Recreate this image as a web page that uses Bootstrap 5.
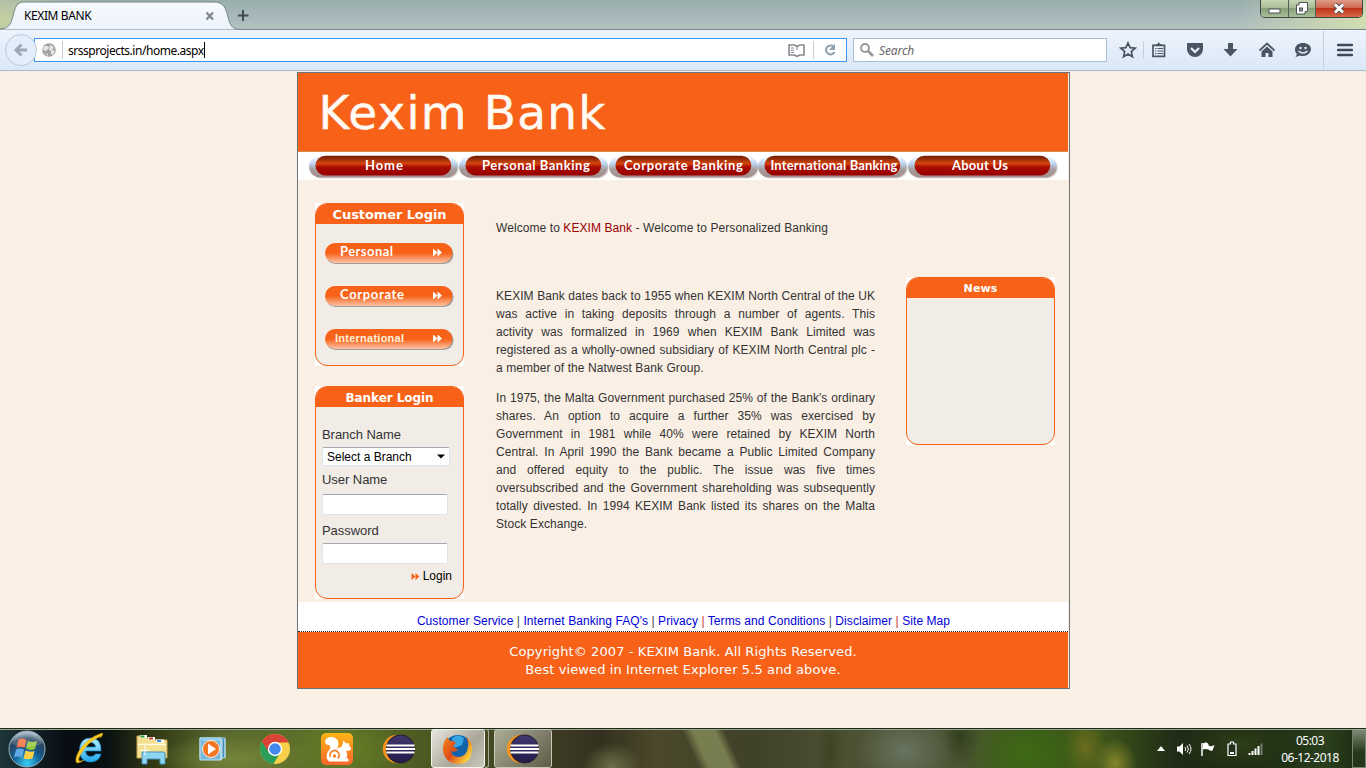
<!DOCTYPE html>
<html lang="en">
<head>
<meta charset="utf-8">
<meta name="viewport" content="width=device-width, initial-scale=1">
<title>KEXIM BANK</title>
<link href="https://cdn.jsdelivr.net/npm/bootstrap@5.3.0/dist/css/bootstrap.min.css" rel="stylesheet">
<style>
  body{width:1366px;height:768px;overflow:hidden;background:#faefe5;font-family:"Liberation Sans",sans-serif;font-size:12px;line-height:18px;color:#333}
  svg{display:block;flex:none}
  a{text-decoration:none}
  /* browser chrome */
  .chrome{height:71px;font-family:"Noto Sans",sans-serif;color:#000}
  .titlebar{height:30px;background:radial-gradient(ellipse 90px 40px at 0 20px,#c5cf9f,transparent),radial-gradient(ellipse 130px 60px at 1366px 20px,#d3deb0,transparent),linear-gradient(#9aafac,#a6b7bc 50%,#b1c2bd);border-bottom:1px solid #75868a}
  .tabbox{width:238px;height:30px}
  .tabtitle{left:24px;top:7px;font-size:12px;letter-spacing:-.4px}
  .newtab{margin-top:10px}
  .toolbar{height:41px;background:linear-gradient(#edf3fc,#dbe8f8);border-bottom:1px solid #a5bbd2;padding-left:5px}
  .urlbox{width:813px;height:24px;margin-left:-3px;background:#fff;border:1px solid #3b97f2}
  .urlrow{width:842px}
  .backbtn{width:32px;height:32px;border:1px solid #b9cbdd;background:#e4eefa;border-radius:50%;z-index:2}
  .searchbox{width:254px;height:24px;margin-left:6px;background:#fff;border:1px solid #a9bdd4;font-size:12px;color:#666}
  .vsep{width:1px;height:18px;background:#c3cfdb}
  .winbtns{width:103px;height:18px;margin-right:3px;border:1px solid #3d4a42;border-top:0;border-radius:0 0 5px 5px;overflow:hidden}
  .wb{height:17px;background:linear-gradient(#c7d5b5,#a9bc97 45%,#879f7b 50%,#a9bf97);border-right:1px solid #526252}
  .wb.close{background:linear-gradient(#dc9c88,#cf694e 45%,#bf3417 50%,#d8694a);border-right:0}
  /* page */
  .stage{height:657px;padding-top:1px}
  .frame{width:773px;height:617px;margin-left:297px;border:1px solid #6c7377}
  .inner{width:770px}
  .banner{height:79px;background:#f76218;border-bottom:1px solid #d88a45}
  .navrow{height:28px;background:#fff;padding-left:11px}
  .cell{width:149.75px;height:28px}
  .nt{font:bold 13px Lato,sans-serif;font-variant-ligatures:none;fill:#fff}
  .nt.intl{font:bold 11px "Liberation Sans",sans-serif;fill:#fff3dc}
  .mainarea{height:422px;background:#faefe5}
  .leftcol{width:149px;margin:23px 0 0 17px}
  .cornerbox{background:#fff}
  .panel{background:#f1ece6;border:1px solid #f76218;border-radius:12px;overflow:hidden}
  .phead{height:20px;background:#f76218;color:#fff;font:bold 13px/20px "DejaVu Sans",sans-serif;text-align:center;letter-spacing:-.1px}
  .story{width:379px;margin-left:32px;padding-top:39px;text-align:justify;text-align-last:justify;letter-spacing:.06px}
  .endline{display:block;text-align-last:left;letter-spacing:.08px}
  .newscol{margin:97px 0 0 31px;width:149px}
  .lbl{font-size:13px;line-height:18px;letter-spacing:-.05px}
  .fbox{border:1px solid #dfe3ea;border-top-color:#a5a9b1;border-radius:2px;background:#fff;width:126px;height:21px;padding:0}
  .sel{width:128px;height:19px;color:#000;padding:0 4px}
  .links{height:30px;background:#fff;border-bottom:1px dotted #222;padding-top:10px;padding-left:1px;color:#444;letter-spacing:.074px}
  .links a{color:#0000d8}
  .foot{height:56px;background:#f76218;color:#fff;font:13px/18px "DejaVu Sans",sans-serif;padding-top:11px;text-align:center;letter-spacing:.1px}
  /* taskbar */
  .taskbar{height:40px;border-top:1px solid #1d2a18;box-shadow:inset 0 1px #9aa58f;
   background:linear-gradient(65deg,transparent 25%,#858c58cc 36%,#858c58cc 58%,transparent 68%) 675px 0/80px 40px no-repeat,radial-gradient(ellipse 80px 26px at 235px 30px,#76853a,transparent),radial-gradient(ellipse 60px 30px at 345px 20px,#647c24,transparent),radial-gradient(ellipse 30px 24px at 612px 38px,#6d7048,transparent),radial-gradient(ellipse 14px 40px at 830px 20px,#3c4424,transparent),radial-gradient(ellipse 50px 40px at 905px 22px,#68735f,transparent),radial-gradient(ellipse 20px 30px at 960px 8px,#33401f,transparent),radial-gradient(ellipse 60px 45px at 1025px 25px,#3f6a14,transparent),radial-gradient(ellipse 22px 30px at 1085px 18px,#6b6c1e,transparent),radial-gradient(ellipse 22px 25px at 1115px 34px,#84842a,transparent),radial-gradient(ellipse 60px 40px at 1240px 15px,#2d3f19,transparent),linear-gradient(90deg,#1d3538,#070c12 5%,#0b1212 8%,#2f3612 11%,#59672e 16%,#5e7228 25%,#47521f 33%,#403d25 40%,#33301f 44%,#4b482b 48%,#3f4129 55%,#4d5134 62%,#4c5434 70%,#395619 76%,#3f5a1a 80%,#202c16 86%,#16200f 91%,#2a401d 97%,#1b2a12)}
  .orb{width:59px;padding-left:8px}
  .slot{width:61.8px}
  .taskbtn{height:39px;border:1px solid #c9cabd;border-radius:3px;background:linear-gradient(135deg,#e0dfd2aa,#9a998955)}
  .taskbtn.current{background:linear-gradient(135deg,#e7e6df,#aaa798 60%,#cac9bd);border-color:#f4f4ef}
  .tray{margin-left:auto;color:#fff}
  .clock{width:74px;font:12px/17px "Noto Sans",sans-serif;text-align:center;letter-spacing:-.5px;white-space:nowrap}
  .peek{width:14px;height:38px;border:1px solid #77866a;background:linear-gradient(#7b8873,#24371a 60%)}
</style>
</head>
<body>
<svg width="0" height="0" class="position-absolute">
  <defs>
    <linearGradient id="red" x2="0" y2="1"><stop offset="0" stop-color="#6d1b04"/><stop offset=".18" stop-color="#982e08"/><stop offset=".38" stop-color="#d5450f"/><stop offset=".58" stop-color="#a80b02"/><stop offset="1" stop-color="#970000"/></linearGradient>
    <linearGradient id="met" x2="0" y2="1"><stop offset="0" stop-color="#fff"/><stop offset=".35" stop-color="#bcd6f4"/><stop offset=".62" stop-color="#a69c9c"/><stop offset="1" stop-color="#a58f8b"/></linearGradient>
    <linearGradient id="org" x2="0" y2="1"><stop offset="0" stop-color="#f76218"/><stop offset=".5" stop-color="#f76218"/><stop offset="1" stop-color="#fbc3a6"/></linearGradient>
    <linearGradient id="tabg" x2="0" y2="1"><stop offset="0" stop-color="#f7fafe"/><stop offset="1" stop-color="#edf3fc"/></linearGradient>
    <linearGradient id="navy" x2="0" y2="1"><stop offset="0" stop-color="#41376f"/><stop offset="1" stop-color="#241b4a"/></linearGradient>
    <radialGradient id="orbg" cx=".5" cy=".9" r=".85"><stop offset="0" stop-color="#39d2f6"/><stop offset=".45" stop-color="#135d93"/><stop offset=".8" stop-color="#28455e"/><stop offset="1" stop-color="#9db4c4"/></radialGradient>
    <linearGradient id="ieg" x2="0" y2="1"><stop offset="0" stop-color="#b5efff"/><stop offset="1" stop-color="#22a8ec"/></linearGradient>
    <linearGradient id="uc" x2="0" y2="1"><stop offset="0" stop-color="#fdb515"/><stop offset="1" stop-color="#f9652e"/></linearGradient>
    <linearGradient id="fx" x2="1" y2=".6"><stop offset="0" stop-color="#f28a1d"/><stop offset=".5" stop-color="#df4a19"/><stop offset="1" stop-color="#f9d53c"/></linearGradient>
    <symbol id="pill" viewBox="0 0 150 28">
      <rect x="2" y="5" width="148" height="21.500" rx="10.700" fill="#dad6d4"/>
      <rect y="4" width="149" height="21.500" rx="10.700" fill="url(#met)"/>
      <rect x="6.500" y="3.700" width="136" height="19.800" rx="9.900" fill="url(#red)"/>
    </symbol>
    <symbol id="arrows" viewBox="0 0 9 8"><path d="M0 0L4.500 4 0 8zM4.500 0L9 4 4.500 8z"/></symbol>
    <symbol id="sidebtn" viewBox="0 0 132 24">
      <rect x="2" y="2.500" width="127.500" height="19.500" rx="9.700" fill="#a09c99"/>
      <rect x="1" y="1" width="127.500" height="20" rx="10" fill="url(#org)"/>
      <use href="#arrows" x="109" y="6.500" width="9" height="8" fill="#fff"/>
    </symbol>
    <symbol id="eclipse" viewBox="0 0 34 32">
      <circle cx="15" cy="16" r="14.200" fill="#f7941e"/><circle cx="18.500" cy="16" r="14.500" fill="#282431"/><circle cx="18.500" cy="16" r="13.500" fill="url(#navy)"/>
      <path d="M4.500 12.500h28M4 16h29M4.500 19.500h28" stroke="#fff" stroke-width="1.800"/>
    </symbol>
  </defs>
</svg>

<header class="chrome">
  <div class="titlebar d-flex">
    <div class="tabbox position-relative">
      <svg width="240" height="30"><path d="M0 30V29C9 28.500 11 24 13 16 15 7 17 2 24 2H214C224 2 226 9 228 17 230 25 232 29 239 29.500V30z" fill="url(#tabg)" stroke="#75868a"/><path d="M206.500 12.500l6.500 7M213 12.500l-6.500 7" stroke="#7d8792" stroke-width="2.200"/></svg>
      <span class="tabtitle position-absolute">KEXIM BANK</span>
    </div>
    <svg width="12" height="12" class="newtab"><path d="M5 0v11M-.5 5.500h11" stroke="#414b50" stroke-width="2"/></svg>
    <div class="winbtns d-flex ms-auto">
      <div class="wb d-flex justify-content-center align-items-center" style="width:28px"><svg width="14" height="14"><rect x="1" y="7" width="11" height="4" fill="#fff" stroke="#4c555b"/></svg></div>
      <div class="wb d-flex justify-content-center align-items-center" style="width:27px"><svg width="14" height="14"><path d="M4 .5h8.500v9H10V12H1.500V3H4z" fill="#fff" stroke="#4c555b"/><rect x="4.500" y="6" width="3" height="3" fill="#8fa080" stroke="#4c555b"/></svg></div>
      <div class="wb close flex-fill d-flex justify-content-center align-items-center"><svg width="14" height="14"><path d="M3 2.500l8 8M11 2.500l-8 8" stroke="#574b50" stroke-width="4.600"/><path d="M3 2.500l8 8M11 2.500l-8 8" stroke="#fff" stroke-width="2.800"/></svg></div>
    </div>
  </div>
  <div class="toolbar d-flex align-items-center">
    <div class="urlrow d-flex align-items-center">
      <div class="backbtn d-flex align-items-center justify-content-center flex-shrink-0"><svg width="16" height="16"><path d="M14 8H3M8.500 2.500L3 8l5.500 5.500" fill="none" stroke="#9ca9b8" stroke-width="3"/></svg></div>
      <div class="urlbox d-flex align-items-center">
        <svg width="14" height="14" style="margin-left:7px"><circle cx="7" cy="7" r="6.800" fill="#a2a2a2"/><path d="M2 3l4 0 1 2-3 3-3-1zM8 2l4 2-2 3 3 1-2 4-2-1V8L7 7zM3 10l3 1v2z" fill="#e6e6e6"/></svg>
        <span class="vsep" style="margin-left:6px"></span>
        <span style="margin-left:5px;padding-top:2px;letter-spacing:-.47px">srssprojects.in/home.aspx</span><span style="width:1px;height:16px;background:#000"></span>
        <svg width="18" height="14" class="ms-auto"><path d="M1 2h5.500L9 3.500 11.500 2H16v10h-4.500L9 13.500 6.500 12H1z" fill="#fff" stroke="#858b91" stroke-width="1.600"/><path d="M9 4v3M3 5h3M3 7.300h3M3 9.500h3" stroke="#858b91"/></svg>
        <span class="vsep" style="margin-left:7px"></span>
        <svg width="14" height="14" style="margin:0 9px"><path d="M10.500 3.500A4.500 4.500 0 1 0 11.500 9" fill="none" stroke="#92a1b0" stroke-width="2"/><path d="M12 1v6H6z" fill="#92a1b0"/></svg>
      </div>
    </div>
    <div class="searchbox d-flex align-items-center"><svg width="14" height="14" style="margin-left:6px"><circle cx="5" cy="5" r="3.900" fill="none" stroke="#989898" stroke-width="2"/><path d="M8 8l5 5" stroke="#989898" stroke-width="2.600"/></svg><i style="margin-left:5px;padding-top:2px;letter-spacing:-.1px">Search</i></div>
    <div class="d-flex align-items-center" style="margin-left:12px">
      <svg width="18" height="18"><path d="M9 2l2.100 4.700 5 .5-3.800 3.400 1.200 5.100L9 13l-4.500 2.700 1.200-5.100L1.900 7.200l5-.5z" fill="none" stroke="#4a5661" stroke-width="1.700"/></svg>
      <span class="vsep" style="margin-left:6px"></span>
      <svg width="16" height="16" style="margin-left:7px"><path d="M2 3.300h11.500v11H2z" fill="none" stroke="#4a5661" stroke-width="1.700"/><path d="M5 3.500V2h1.500L7.700 0 9 2h1.500v1.500z" fill="#4a5661"/><path d="M4 6.500h1.500M6.500 6.500H12M4 9h1.500M6.500 9H12M4 11.500h1.500M6.500 11.500H12" stroke="#4a5661"/></svg>
      <svg width="18" height="16" style="margin-left:19px"><path d="M1.500 1h15q.5 0 .5 1v5a8 8 0 0 1-16 0V2q0-1 .5-1z" fill="#4a5661"/><path d="M5 6l4 4 4-4" fill="none" stroke="#e7effa" stroke-width="2.200"/></svg>
      <svg width="16" height="16" style="margin-left:19px"><path d="M5 1h5v6h4.500l-7 7.500L.5 7H5z" fill="#4a5661"/></svg>
      <svg width="16" height="16" style="margin-left:20px"><path d="M.5 8.500L8 1.500l7.500 7" fill="none" stroke="#4a5661" stroke-width="1.800"/><path d="M8 4.500l5.500 5V15h-4v-4h-3v4h-4V9.500z" fill="#4a5661"/></svg>
      <svg width="18" height="16" style="margin-left:19px"><path d="M9 1c4.500 0 8 2.500 8 6s-3.500 7-8 7c-1 0-2 0-3-.5L1.500 15 3 12C1.500 11 1 9 1 7.500 1 3.500 4.500 1 9 1z" fill="#4a5661"/><circle cx="6.500" cy="6" r="1.200" fill="#e7effa"/><circle cx="11.500" cy="6" r="1.200" fill="#e7effa"/><path d="M4.500 9q4.500 4 9 0" fill="none" stroke="#e7effa" stroke-width="1.400"/></svg>
      <span class="vsep" style="height:38px;margin-left:11px"></span>
      <svg width="16" height="14" style="margin-left:13px"><path d="M1 2h14M1 7h14M1 12h14" stroke="#3d4a57" stroke-width="2.400" stroke-linecap="round"/></svg>
    </div>
  </div>
</header>

<main class="stage">
  <div class="frame"><div class="inner">
    <div class="banner"><svg width="400" height="78" role="img" aria-label="Kexim Bank"><text x="20.500" y="55.500" font-family="DejaVu Sans,sans-serif" font-size="47" fill="#fffaf3" stroke="#fffaf3" stroke-width=".4" textLength="287">Kexim Bank</text></svg></div>
    <nav class="navrow d-flex">
      <svg class="cell" viewBox="0 0 150 28"><use href="#pill" width="150" height="28"/><text class="nt" x="56" y="18" textLength="38">Home</text></svg>
      <svg class="cell" viewBox="0 0 150 28"><use href="#pill" width="150" height="28"/><text class="nt" x="23" y="18" textLength="108">Personal Banking</text></svg>
      <svg class="cell" viewBox="0 0 150 28"><use href="#pill" width="150" height="28"/><text class="nt" x="15" y="18" textLength="119">Corporate Banking</text></svg>
      <svg class="cell" viewBox="0 0 150 28"><use href="#pill" width="150" height="28"/><text class="nt" x="12.500" y="18" textLength="127">International Banking</text></svg>
      <svg class="cell" viewBox="0 0 150 28"><use href="#pill" width="150" height="28"/><text class="nt" x="44" y="18" textLength="56">About Us</text></svg>
    </nav>
    <div class="mainarea d-flex align-items-start">
      <div class="leftcol">
        <div class="cornerbox"><div class="panel" style="height:163px">
          <div class="phead"><div style="padding-top:1px">Customer Login</div></div>
          <div style="padding:18px 0 0 8px">
            <svg width="132" height="24"><use href="#sidebtn" width="132" height="24"/><text class="nt" x="16" y="14" textLength="53">Personal</text></svg>
            <svg width="132" height="24" style="margin-top:19px"><use href="#sidebtn" width="132" height="24"/><text class="nt" x="16" y="14" textLength="64">Corporate</text></svg>
            <svg width="132" height="24" style="margin-top:19px"><use href="#sidebtn" width="132" height="24"/><text class="nt intl" x="11" y="14" textLength="69">International</text></svg>
          </div>
        </div></div>
        <div class="cornerbox" style="margin-top:20px"><div class="panel" style="height:213px">
          <div class="phead" style="letter-spacing:-.05px;font-size:12px"><div style="padding-top:1px">Banker Login</div></div>
          <div style="padding:19px 0 0 6px">
            <div class="lbl">Branch Name</div>
            <div class="fbox sel d-flex align-items-center justify-content-between" style="margin-top:3px"><span>Select a Branch</span><svg width="8" height="5"><path d="M0 .5h8L4 4.500z"/></svg></div>
            <div class="lbl" style="margin-top:5px">User Name</div>
            <input class="fbox d-block" aria-label="User Name" style="margin-top:5px">
            <div class="lbl" style="margin-top:7px">Password</div>
            <input class="fbox d-block" type="password" aria-label="Password" style="margin-top:3px">
            <div class="d-flex align-items-center justify-content-end text-black" style="margin:3px 11px 0 0"><svg width="9" height="7" fill="#f76218" style="margin-right:3px"><use href="#arrows" width="9" height="7"/></svg>Login</div>
          </div>
        </div></div>
      </div>
      <div class="story">
        <div class="endline" style="height:68px">Welcome to <span style="color:#900">KEXIM Bank</span> - Welcome to Personalized Banking</div>
        <p style="margin-bottom:12px">KEXIM Bank dates back to 1955 when KEXIM North Central of the UK<br>was active in taking deposits through a number of agents. This<br>activity was formalized in 1969 when KEXIM Bank Limited was<br>registered as a wholly-owned subsidiary of KEXIM North Central plc -<span class="endline">a member of the Natwest Bank Group.</span></p>
        <p>In 1975, the Malta Government purchased 25% of the Bank's ordinary<br>shares. An option to acquire a further 35% was exercised by<br>Government in 1981 while 40% were retained by KEXIM North<br>Central. In April 1990 the Bank became a Public Limited Company<br>and offered equity to the public. The issue was five times<br>oversubscribed and the Government shareholding was subsequently<br>totally divested. In 1994 KEXIM Bank listed its shares on the Malta<span class="endline">Stock Exchange.</span></p>
      </div>
      <div class="newscol"><div class="cornerbox"><div class="panel" style="height:168px"><div class="phead" style="font-size:11px;letter-spacing:.1px"><div style="padding-top:1px">News</div></div></div></div></div>
    </div>
    <div class="links text-center"><a href="#">Customer Service</a> | <a href="#">Internet Banking FAQ's</a> | <a href="#">Privacy</a> <span style="color:#c33">|</span> <a href="#">Terms and Conditions</a> | <a href="#">Disclaimer</a> <span style="color:#c33">|</span> <a href="#">Site Map</a></div>
    <div class="foot">Copyright© 2007 - KEXIM Bank. All Rights Reserved.<br>Best viewed in Internet Explorer 5.5 and above.</div>
  </div></div>
</main>

<footer class="taskbar d-flex align-items-center">
  <div class="orb"><svg width="38" height="38"><circle cx="19" cy="19" r="18" fill="url(#orbg)" stroke="#9ab1bd"/><path d="M10.500 9.500q4-2 8 .5l-2 8q-4-2-8 0z" fill="#f26a36"/><path d="M20 11q4 2 9 0l-2 8q-4.500 2-9-.500z" fill="#93c83d"/><path d="M8 19.500q4-2 8 0l-2 8q-4-2-8 0z" fill="#62a8e4"/><path d="M17.500 20.500q4.500 2 9 .5l-2 7.500q-4.500 1.500-9 0z" fill="#fcd045"/><path d="M4 14Q6 2 19 2t15 12Q20 20 4 14z" fill="#fff" opacity=".17"/></svg></div>
  <div class="slot d-flex justify-content-center"><svg width="34" height="34"><path d="M28 19H12.500q.5 5.500 5.500 5.500 3 0 4.500-2.500h5.500q-2 8-10.500 8Q6.500 29.500 6.500 18 6.800 6 18 6q10.500.5 10 13zM12.500 15h10q-.5-4.500-5-4.500-4 0-5 4.500z" fill="url(#ieg)" fill-rule="evenodd" stroke="#1386c9" stroke-width=".7"/><path d="M27 6Q32 0 28 1.500 14 6 6 19 1 28 4 31q3 0 7-3Q3 32 7 23.500 14 10 27 4.500q2-1 0 1.500z" fill="#fcce25" stroke="#d89f10" stroke-width=".6"/></svg></div>
  <div class="slot d-flex justify-content-center"><svg width="34" height="32"><path d="M2 3h8l1 2h8l1 2h12v18H2z" fill="#f5df91" stroke="#c6a84f"/><path d="M5 3.500h7M13 5.500h7M21 8h8" stroke="#fff" stroke-width="3"/><path d="M5.500 3.500h4" stroke="#26a32b" stroke-width="2"/><path d="M14 5.500h4" stroke="#cb3a2d" stroke-width="2"/><path d="M22 8h4" stroke="#338ee4" stroke-width="2"/><path d="M3 11.500h28" stroke="#fffbe0" stroke-width="1.500"/><path d="M7 31V20q0-1 1-1h20q2 0 2 1v11h-5v-5H12v5z" fill="#8ed5f2" stroke="#4392ba"/><path d="M10 13v9M5.500 17.500h9" stroke="#fff"/></svg></div>
  <div class="slot d-flex justify-content-center"><svg width="30" height="30"><path d="M2 4h25v20H2z" fill="#468cb6" stroke="#9ed2ee"/><path d="M4 6h19v20H2V4h21v22M24 5v20M27 5v19" fill="#75b8dc" stroke="#bfe4f4"/><circle cx="13" cy="15" r="8.500" fill="#f27521" stroke="#fff3dd"/><path d="M10 9.500l8 5.500-8 5.500z" fill="#fff"/></svg></div>
  <div class="slot d-flex justify-content-center"><svg width="32" height="32"><circle cx="16" cy="16" r="15" fill="#f9d04a"/><path d="M16 16L3 8.500A15 15 0 0 0 14.500 31l7-12z" fill="#2a9d58"/><path d="M3 8.500A15 15 0 0 1 29.500 9.500H16L9.500 19z" fill="#d94436"/><circle cx="16" cy="16" r="7.200" fill="#fff"/><circle cx="16" cy="16" r="5.800" fill="#4488ee"/></svg></div>
  <div class="slot d-flex justify-content-center"><svg width="32" height="32"><rect width="32" height="32" rx="5" fill="url(#uc)"/><path d="M8 28.500Q3.500 24.500 7 18.500q4-4 1-6.500-4 0-4-4 2-4.500 7-4 6.500 1 6.500 7 0 3-2 5 3-2 5.500-2.500l1.500-6 2.500 3 2.500-.500 1 3.500q2.500 1.500 1.500 3-2 1.500-5 1.500 2 3.500 1 6h-2q4 .5 3.500 4.500z" fill="#fff"/><path d="M9.500 24a4.500 4.500 0 1 1 7 1.500" fill="none" stroke="#f98125" stroke-width="1.600"/><circle cx="13.500" cy="23" r="1.700" fill="#f98125"/></svg></div>
  <div class="slot d-flex justify-content-center"><svg width="34" height="32"><use href="#eclipse" width="34" height="32"/></svg></div>
  <div class="d-flex" style="margin-left:1px;margin-right:5px">
    <div class="taskbtn current d-flex align-items-center justify-content-center" style="width:54px"><svg width="32" height="32"><circle cx="16" cy="16" r="14" fill="#1263a9"/><path d="M10 5q6-5 12 0l-2 7-8 3z" fill="#35a6df"/><path d="M5 4q-5 7-4 14 2 12 15 13 13 0 14-14 1-9-6-13 3 5 2 10-1 9-9 10-7 0-8-6 3 2 7-1-3-2-5-4l3-3q-3-3-6-2z" fill="url(#fx)"/></svg></div>
    <div style="width:4px;border:1px solid #a9aa9b;border-left:0;border-radius:0 3px 3px 0"></div>
  </div>
  <div class="taskbtn d-flex align-items-center justify-content-center" style="width:58px"><svg width="34" height="32"><use href="#eclipse" width="34" height="32"/></svg></div>
  <div class="tray d-flex align-items-center">
    <svg width="8" height="5"><path d="M0 5l4-5 4 5z" fill="#fff"/></svg>
    <svg width="16" height="16" style="margin-left:11px"><path d="M1 5.500h2.500L7 2v12L3.500 10.500H1z" fill="#fff"/><path d="M9 6q1.500 2 0 4M11 4.500q2.800 3.500 0 7M13 3q4 5 0 10" fill="none" stroke="#fff"/></svg>
    <svg width="16" height="16" style="margin-left:8px"><path d="M2 2v13" stroke="#fff" stroke-width="1.500"/><path d="M3 2.500q3-2 5.500.5v1.500q3 1.500 6-.5l-2 5.500q-2 1-4-1-3-1-5.500 0z" fill="#fff"/></svg>
    <svg width="10" height="16" style="margin-left:11px"><path d="M3.500 1h3v2H9v11.500H1V3h2.500z" fill="#20301a" stroke="#fff" stroke-width="1.200"/><path d="M3 12h4" stroke="#fff" stroke-width="2"/></svg>
    <svg width="16" height="14" style="margin-left:11px"><path d="M1.500 13v-2M4.500 13V9M7.500 13V6.500M10.500 13V4" stroke="#fff" stroke-width="2"/><path d="M13.500 13V1.500" stroke="#727b68" stroke-width="2"/></svg>
    <div class="clock" style="margin-left:9px">05:03<br>06-12-2018</div>
    <div class="peek" style="margin-left:5px"></div>
  </div>
</footer>
<script src="https://cdn.jsdelivr.net/npm/bootstrap@5.3.0/dist/js/bootstrap.bundle.min.js"></script>
</body>
</html>
